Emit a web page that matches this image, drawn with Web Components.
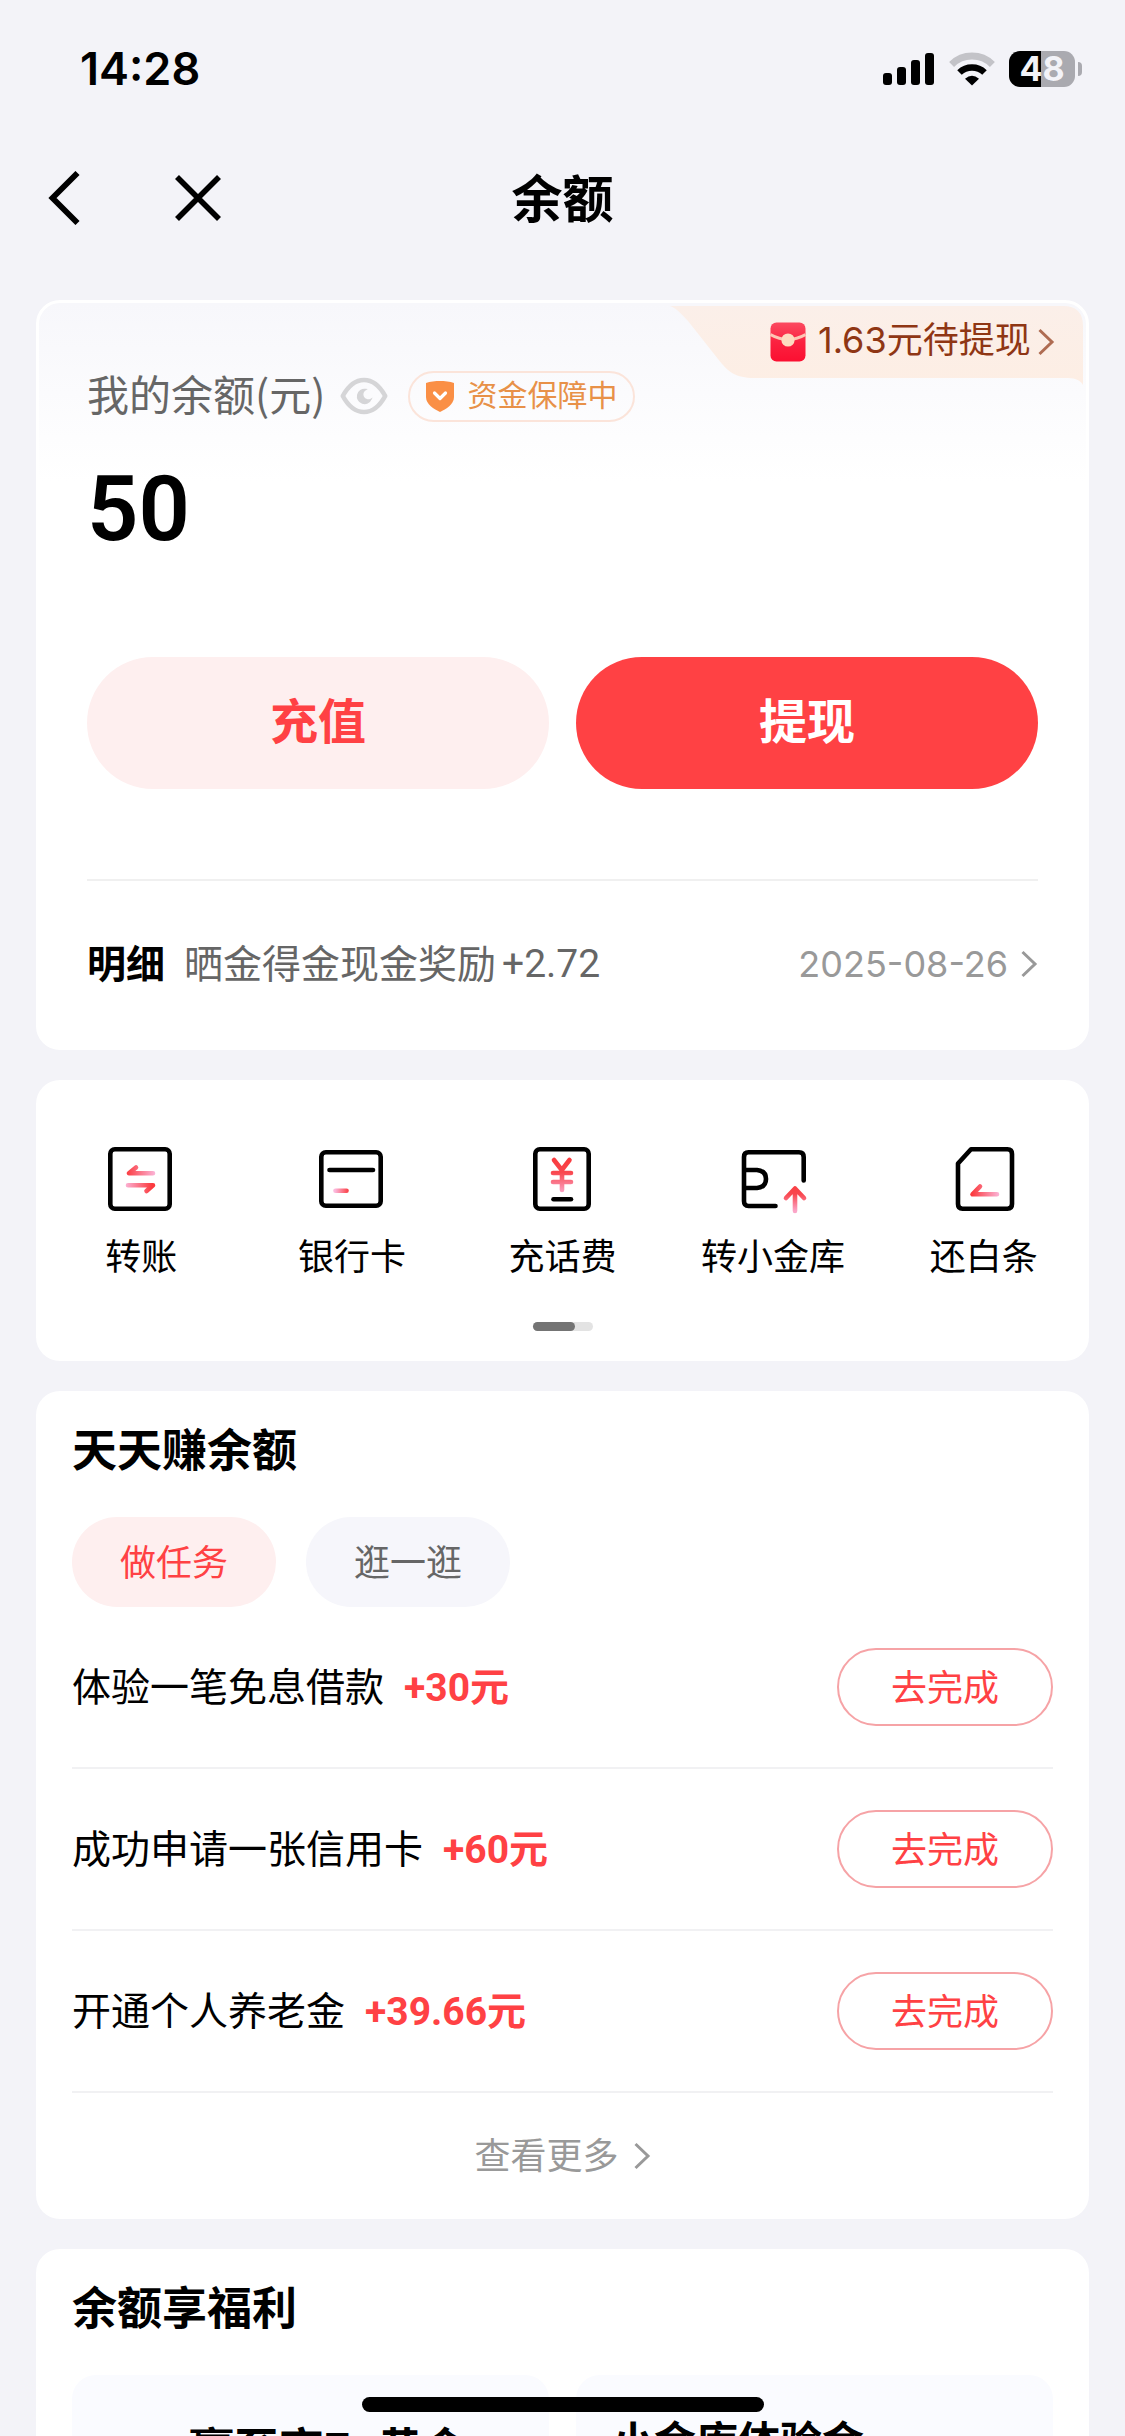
<!DOCTYPE html>
<html lang="zh-CN">
<head>
<meta charset="utf-8">
<meta name="viewport" content="width=device-width, initial-scale=1">
<title>余额</title>
<style>
  html, body { margin: 0; height: 100%; }
  body {
    background: #f3f3f8;
    color: #000;
    font-family: "Noto Sans CJK SC", sans-serif;
    --red: #ff4144;
    --red-soft: #feefef;
    --grey: #666;
    --grey-light: #999;
    --line: #f1f1f3;
    --num: Roboto, "Noto Sans CJK SC", sans-serif;
    --sys: Inter, "Noto Sans CJK SC", sans-serif;
  }
</style>
</head>
<body>
<balance-app></balance-app>

<script>
const define = (name, html, setup) => {
  const tpl = document.createElement('template');
  tpl.innerHTML = html;
  customElements.define(name, class extends HTMLElement {
    connectedCallback() {
      if (this.shadowRoot) return;
      this.attachShadow({ mode: 'open' }).append(tpl.content.cloneNode(true));
      if (setup) setup(this, this.shadowRoot);
    }
  });
};

/* ---------- icons ---------- */
const hGrad = (id, a, b) => `<linearGradient id="${id}" gradientUnits="userSpaceOnUse" x1="${a}" x2="${b}" y1="0" y2="0"><stop stop-color="#fb3a3e"/><stop offset="1" stop-color="#fbb8dc"/></linearGradient>`;
const vGrad = (id, a, b) => `<linearGradient id="${id}" gradientUnits="userSpaceOnUse" y1="${a}" y2="${b}" x1="0" x2="0"><stop stop-color="#f93c3f"/><stop offset=".4" stop-color="#f9484f"/><stop offset="1" stop-color="#fba6c8"/></linearGradient>`;
const line = 'fill="none" stroke="#000" stroke-width="4.6" stroke-linecap="round" stroke-linejoin="round"';
const tint = 'fill="none" stroke="url(#g)" stroke-width="4.6" stroke-linecap="round" stroke-linejoin="round"';

const ICONS = {
  back: [32, 54, `<path d="M29.500 2 4.500 27 29.500 52" fill="none" stroke="#000" stroke-width="5.800"/>`],
  close: [48, 48, `<path d="M2 3 44 45M44 3 2 45" fill="none" stroke="#000" stroke-width="5.600"/>`],
  chevron: [18, 28, `<path d="M2.500 2 15 14 2.500 26" fill="none" stroke="currentColor" stroke-width="3"/>`],
  signal: [52, 34, `<rect y="21" width="9" height="12" rx="3"/><rect x="14" y="15" width="9" height="18" rx="3"/><rect x="28" y="8" width="9" height="25" rx="3"/><rect x="42" y="1" width="9" height="32" rx="3"/>`],
  wifi: [46, 34, `<path d="M2.600 12.500A29 29 0 0 1 43.400 12.500" fill="none" stroke="#c3c3c8" stroke-width="7"/><path d="M10.500 20.500A18 18 0 0 1 35.500 20.500" fill="none" stroke="#000" stroke-width="6.500"/><path d="M23 33.500 16 26.800Q23 20.800 30 26.800Z"/>`],
  eye: [48, 38, `<path d="M2.800 19Q11.500 3 24 3T45.200 19Q36.500 35 24 35T2.800 19Z" fill="none" stroke="#d5d5d7" stroke-width="4.600" stroke-linejoin="round"/><path d="M25.500 12.500A7 7 0 1 0 31 22.300A5.600 5.600 0 0 1 25.500 12.500Z" fill="#d5d5d7" stroke="#d5d5d7" stroke-width="1.500"/>`],
  shield: [28, 32, `<path d="M14 1C18.500 1 24 1.500 28 3V17C28 24.500 20 29 14 32C8 29 0 24.500 0 17V3C4 1.500 9.500 1 14 1Z" fill="#fa8f45"/><path d="M8.500 13 14 18.500 19.500 13" fill="none" stroke="#fff" stroke-width="3.200" stroke-linecap="round" stroke-linejoin="round"/>`],
  envelope: [36, 40, `<defs><linearGradient id="g" x1="0" x2="0" y1="0" y2="1"><stop stop-color="#fb4a60"/><stop offset=".5" stop-color="#fb2240"/><stop offset="1" stop-color="#fb0f31"/></linearGradient></defs><rect x=".5" y=".5" width="35" height="39" rx="6" fill="url(#g)"/><path d="M.5 12.500Q18 22.500 35.500 12.500" fill="none" stroke="#fdc6b4" stroke-width="3"/><circle cx="18" cy="18" r="6.600" fill="#fddcc0"/>`],
  transfer: [72, 72, `<defs>${hGrad('g', 21, 51)}${hGrad('h', 47, 19)}</defs><rect x="5.300" y="6.300" width="59.400" height="59.400" rx="4.500" ${line}/><path d="M31 24.500 24 30.300H48" ${tint}/><path d="M23 42.300H48L41.500 48" ${tint.replace('#g', '#h')}/>`],
  card: [72, 72, `<defs>${hGrad('g', 33, 19)}</defs><rect x="5.300" y="9.300" width="59.400" height="53.400" rx="4.500" ${line}/><path d="M13.500 27H57" ${line}/><path d="M19.500 47.800H30.500" ${tint}/>`],
  phone: [72, 72, `<defs>${vGrad('g', 16, 50)}</defs><rect x="9.300" y="6.300" width="53.400" height="59.400" rx="4.500" ${line}/><path d="M28 17 35.800 27 43.500 17M27 30H45M27 39H45M36 27V47" ${tint}/><path d="M27.500 56.300H45" ${line}/>`],
  vault: [72, 72, `<defs>${vGrad('g', 40, 68)}</defs><path d="M66.700 37.500V14Q66.700 9.300 62 9.300H11.500Q7 9.300 7 14V58Q7 63 11.500 63H38.500M7 27H20Q29 28 29 36T20 45H7" ${line}/><path d="M58 68V46M49 55 58 45.500 67 55" ${tint}/>`],
  iou: [72, 72, `<defs>${hGrad('g', 24, 52)}</defs><path d="M23 6.300H59.500Q64 6.300 64 11V61Q64 65.700 59.500 65.700H14.500Q10 65.700 10 61V20.500Z" ${line}/><path d="M32 43.500 24.500 51.300H49" ${tint}/>`],
};

define('ui-icon', `
  <style>:host{display:inline-flex;flex:none} svg{display:block}</style>`,
  (el, root) => {
    const [w, h, body] = ICONS[el.getAttribute('name')];
    root.innerHTML += `<svg width="${w}" height="${h}" viewBox="0 0 ${w} ${h}" aria-hidden="true">${body}</svg>`;
  });

/* ---------- phone chrome ---------- */
define('battery-level', `
  <style>
    :host{display:flex;align-items:center;gap:3px}
    .cell{box-sizing:border-box;width:66px;height:36px;border-radius:11px;
      background:linear-gradient(90deg,#000 48%,#aaaab0 48%);color:#f3f3f8;
      font:700 34px/36px var(--sys);text-align:center}
    .nub{width:4px;height:14px;border-radius:0 5px 5px 0;background:#aaaab0}
  </style>
  <div class="cell"><slot></slot></div><div class="nub"></div>`);

define('status-bar', `
  <style>
    :host{display:flex;justify-content:space-between;align-items:center;height:138px;padding:0 43px 0 80px}
    .time{font:600 45px/54px var(--sys)}
    .right{display:flex;align-items:center;gap:14px}
  </style>
  <div class="time">14:28</div>
  <div class="right"><ui-icon name="signal"></ui-icon><ui-icon name="wifi"></ui-icon><battery-level>48</battery-level></div>`);

define('nav-bar', `
  <style>
    :host{display:grid;grid-template-columns:1fr auto 1fr;align-items:center;height:120px;padding:0 48px}
    .left{display:flex;align-items:center;gap:95px}
    button{display:flex;padding:0;border:0;background:none}
    h1{margin:0;padding-bottom:4px;font-size:51px;line-height:72px;font-weight:700}
  </style>
  <div class="left">
    <button aria-label="返回"><ui-icon name="back"></ui-icon></button>
    <button aria-label="关闭"><ui-icon name="close"></ui-icon></button>
  </div>
  <h1><slot></slot></h1><span></span>`);

define('home-indicator', `
  <style>:host{position:fixed;bottom:24px;left:50%;margin-left:-201px;width:402px;height:15px;border-radius:8px;background:#000}</style>`);

/* ---------- shared parts ---------- */
define('ui-card', `
  <style>
    :host{display:block;position:relative;box-sizing:border-box;background:#fff;border-radius:24px}
    h2{margin:0;padding:27px 36px 9px;font-size:45px;line-height:60px;font-weight:700}
    h2[hidden]{display:none}
  </style>
  <h2 hidden></h2><slot></slot>`,
  (el, root) => {
    const t = el.getAttribute('heading');
    if (t) { const h = root.querySelector('h2'); h.textContent = t; h.hidden = false; }
  });

define('pill-button', `
  <style>
    :host{display:block;flex:none}
    button{display:block;box-sizing:border-box;width:100%;margin:0;border:0;border-radius:66px;font-family:inherit;font-size:36px}
    :host([kind=primary]) button,:host([kind=soft]) button{height:132px;padding:0 0 10px;font-size:48px;font-weight:700}
    :host([kind=primary]) button{background:var(--red);color:#fff}
    :host([kind=soft]) button{background:var(--red-soft);color:var(--red)}
    :host([kind=tab]) button{height:90px;padding:0 48px 4px;background:#f6f6fb;color:var(--grey)}
    :host([kind=tab][selected]) button{background:var(--red-soft);color:var(--red)}
    :host([kind=outline]) button{height:78px;padding:0 52px 4px;border:2px solid #f6a3a6;background:#fff;color:var(--red)}
  </style>
  <button type="button"><slot></slot></button>`);

/* ---------- balance ---------- */
define('withdraw-tag', `
  <style>
    :host{display:block;position:absolute;top:3px;right:3px}
    button{position:relative;display:flex;align-items:center;box-sizing:border-box;width:413px;height:80px;
      padding:0 28px 8px 100px;border:0;background:none;color:#8f3614;font:400 36px/48px var(--sys)}
    .shape{position:absolute;inset:0}
    button>:not(.shape){position:relative}
    .label{flex:1;margin-left:12px;padding-bottom:4px;text-align:left;white-space:nowrap}
    .go{opacity:.7}
  </style>
  <button type="button">
    <svg class="shape" width="413" height="80" viewBox="0 0 413 80" aria-hidden="true">
      <defs><linearGradient id="p" x1="0" x2="0" y1="0" y2="1"><stop stop-color="#fbefe9"/><stop offset="1" stop-color="#fdeee4"/></linearGradient></defs>
      <path d="M0 0C8 3 12 9 18 15L48 53C58 66 66 72 84 72H398C406 72 411 75 413 79V20Q413 0 393 0Z" fill="url(#p)"/>
    </svg>
    <ui-icon name="envelope"></ui-icon>
    <span class="label"><slot></slot></span>
    <ui-icon class="go" name="chevron"></ui-icon>
  </button>`);

define('balance-card', `
  <style>
    :host{display:block}
    ui-card{border:3px solid #fff;background:linear-gradient(180deg,#f7f7fb,#fff 180px);padding:0 48px}
    .head{display:flex;align-items:center;padding-top:66px;height:54px}
    .label{padding-bottom:6px;font-size:42px;line-height:54px;color:var(--grey)}
    .eye{display:flex;margin:0 20px 0 15px;padding:0;border:0;background:none}
    .safe{display:flex;align-items:center;gap:13px;box-sizing:border-box;height:51px;padding:0 16px;border:2px solid #fbe4da;border-radius:26px;
      font-size:30px;color:#e89148}
    .safe span{padding-bottom:6px;line-height:42px}
    .amount{margin:39px 0 0;font:600 90px/96px var(--num)}
    .actions{display:grid;grid-template-columns:1fr 1fr;gap:27px;margin-top:99px}
    .detail{display:flex;align-items:center;height:166px;margin-top:90px;border-top:2px solid #f0f0f0;
      font-size:39px;line-height:54px;color:var(--grey)}
    .detail b,.detail .what{padding-bottom:6px}
    .detail b{margin-right:19px;color:#000;font-weight:700}
    .detail .num{margin-left:6px;font-family:var(--num)}
    .detail .date{margin-left:auto;margin-right:12px;font-family:var(--sys);font-size:36px;color:var(--grey-light)}
    .detail ui-icon{color:var(--grey-light)}
  </style>
  <ui-card>
    <div class="head">
      <span class="label">我的余额(元)</span>
      <button class="eye" aria-label="隐藏余额"><ui-icon name="eye"></ui-icon></button>
      <div class="safe"><ui-icon name="shield"></ui-icon><span>资金保障中</span></div>
    </div>
    <p class="amount">50</p>
    <div class="actions">
      <pill-button kind="soft">充值</pill-button>
      <pill-button kind="primary">提现</pill-button>
    </div>
    <div class="detail">
      <b>明细</b><span class="what">晒金得金现金奖励</span><span class="num">+2.72</span>
      <span class="date">2025-08-26</span><ui-icon name="chevron"></ui-icon>
    </div>
    <withdraw-tag>1.63元待提现</withdraw-tag>
  </ui-card>`);

/* ---------- quick actions ---------- */
define('quick-action', `
  <style>
    :host{display:block}
    button{display:flex;flex-direction:column;align-items:center;gap:12px;width:100%;padding:0;border:0;background:none;
      font-family:inherit;font-size:36px;line-height:54px;color:#000;white-space:nowrap}
  </style>
  <button type="button"><span class="i"></span><slot></slot></button>`,
  (el, root) => {
    const i = document.createElement('ui-icon');
    i.setAttribute('name', el.getAttribute('icon'));
    root.querySelector('.i').replaceWith(i);
  });

define('quick-grid', `
  <style>
    :host{display:block}
    ui-card{padding:63px 0 30px}
    .row{display:grid;grid-template-columns:repeat(5,1fr)}
    .bar{width:60px;height:9px;margin:41px auto 0;border-radius:5px;background:#e3e3e3}
    .bar i{display:block;width:42px;height:9px;border-radius:5px;background:#747474}
  </style>
  <ui-card>
    <div class="row">
      <quick-action icon="transfer">转账</quick-action>
      <quick-action icon="card">银行卡</quick-action>
      <quick-action icon="phone">充话费</quick-action>
      <quick-action icon="vault">转小金库</quick-action>
      <quick-action icon="iou">还白条</quick-action>
    </div>
    <div class="bar"><i></i></div>
  </ui-card>`);

/* ---------- tasks ---------- */
define('task-item', `
  <style>
    :host{display:flex;align-items:center;box-sizing:border-box;height:162px;border-bottom:2px solid var(--line);font-size:39px;line-height:54px}
    .name{padding-bottom:6px}
    .reward{margin-left:20px;padding-top:2px;color:var(--red);font:700 39px/54px var(--num)}
    pill-button{margin-left:auto}
  </style>
  <span class="name"><slot></slot></span><span class="reward"><slot name="reward"></slot></span>
  <pill-button kind="outline">去完成</pill-button>`);

define('task-card', `
  <style>
    :host{display:block}
    .body{padding:30px 36px 0}
    .tabs{display:flex;gap:30px}
    .more{display:flex;justify-content:center;align-items:center;gap:14px;width:100%;height:126px;padding:0;border:0;background:none;
      font-family:inherit;font-size:36px;line-height:54px;color:var(--grey-light)}
    .more span{padding-bottom:6px}
  </style>
  <ui-card heading="天天赚余额">
    <div class="body">
      <div class="tabs">
        <pill-button kind="tab" selected>做任务</pill-button>
        <pill-button kind="tab">逛一逛</pill-button>
      </div>
      <task-item>体验一笔免息借款<span slot="reward">+30元</span></task-item>
      <task-item>成功申请一张信用卡<span slot="reward">+60元</span></task-item>
      <task-item>开通个人养老金<span slot="reward">+39.66元</span></task-item>
      <button class="more" type="button"><span>查看更多</span><ui-icon name="chevron"></ui-icon></button>
    </div>
  </ui-card>`);

/* ---------- benefits ---------- */
define('benefit-card', `
  <style>
    :host{display:block}
    .body{display:grid;grid-template-columns:1fr 1fr;gap:27px;padding:30px 36px 36px}
    .panel{box-sizing:border-box;height:300px;border-radius:24px;background:#fafbff;white-space:nowrap}
    .gold{padding:42px 0 0 117px;font-size:45px;line-height:60px;font-weight:700}
    .fund{padding:36px 0 0 36px;font-size:42px;line-height:56px;font-weight:700}
  </style>
  <ui-card heading="余额享福利">
    <div class="body">
      <div class="panel gold">赢至高7g黄金</div>
      <div class="panel fund">小金库体验金</div>
    </div>
  </ui-card>`);

define('balance-app', `
  <style>
    :host{display:flex;flex-direction:column;height:100vh;overflow:hidden}
    main{flex:1;min-height:0;overflow:hidden;display:flex;flex-direction:column;gap:30px;padding:42px 36px 0}
    main>*{flex:none}
  </style>
  <status-bar></status-bar>
  <nav-bar>余额</nav-bar>
  <main>
    <balance-card></balance-card>
    <quick-grid></quick-grid>
    <task-card></task-card>
    <benefit-card></benefit-card>
  </main>
  <home-indicator></home-indicator>`);
</script>
</body>
</html>
